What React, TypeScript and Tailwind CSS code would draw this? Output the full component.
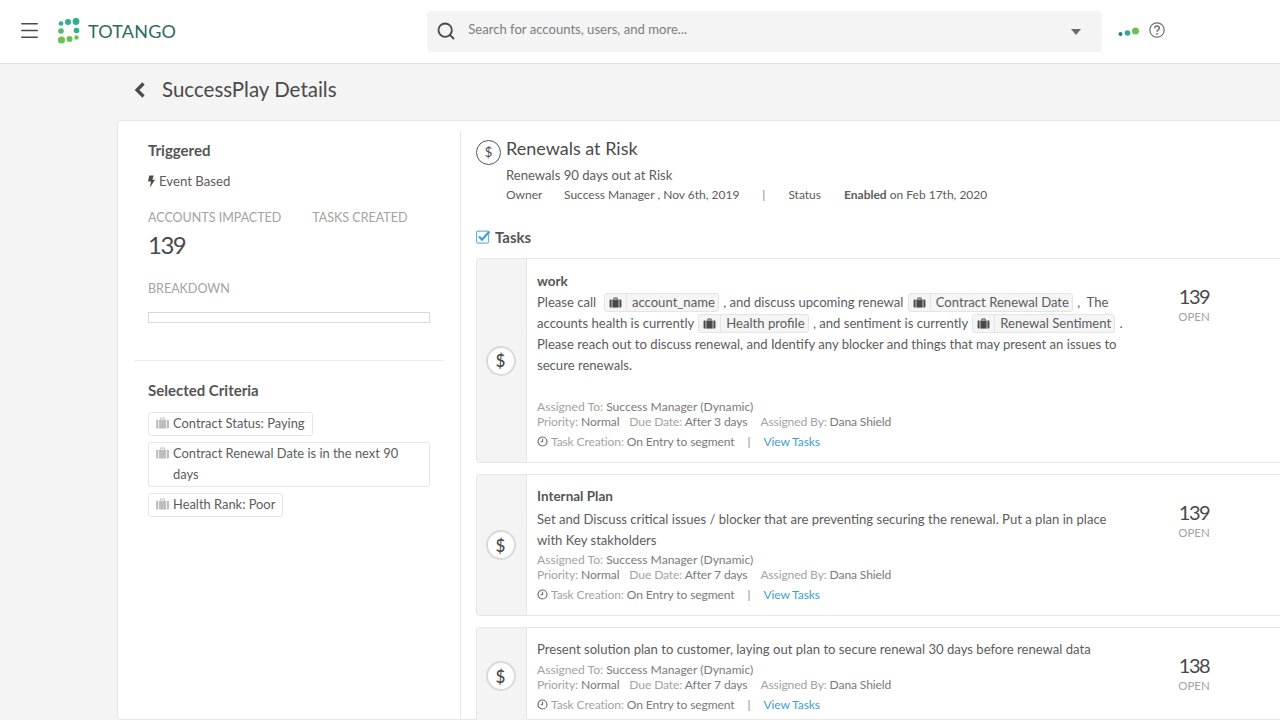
import React from "react";
import { Menu, Search } from "lucide-react";

function Briefcase({ className }: { className?: string }) {
  return (
    <svg viewBox="0 0 14 13" className={className} fill="currentColor">
      <path d="M4.500 3V1.600C4.500 1 5 .5 5.600 .5h2.800c.6 0 1.100 .5 1.100 1.100V3H8.400V1.700H5.600V3z" />
      <rect x="3.300" y="3" width="7.400" height="9.500" />
      <path d="M0 4.200C0 3.500 .5 3 1.200 3h1.200v9.500H1.200C.5 12.500 0 12 0 11.300zM14 4.200C14 3.500 13.500 3 12.800 3h-1.200v9.500h1.200c.7 0 1.200-.5 1.200-1.200z" />
    </svg>
  );
}

function Logo() {
  return (
    <svg viewBox="0 0 26 27" className="h-[27px] w-[26px]">
      <circle cx="4" cy="5.500" r="2.300" fill="#2fae8e" />
      <circle cx="11" cy="4" r="3" fill="#2fae8e" />
      <circle cx="19" cy="3.500" r="3.400" fill="#2fae8e" />
      <circle cx="4" cy="13" r="2.800" fill="#53b96b" />
      <circle cx="19.500" cy="12.500" r="2.800" fill="#2fae8e" />
      <circle cx="4.500" cy="22" r="3.600" fill="#6cc24f" />
      <circle cx="12.500" cy="21" r="3" fill="#6cc24f" />
      <circle cx="19.500" cy="19.500" r="2.200" fill="#6cc24f" />
    </svg>
  );
}

function Dollar({ className }: { className?: string }) {
  return (
    <div className={className}>
      <span className="leading-none">$</span>
    </div>
  );
}

function Token({ label }: { label: string }) {
  return (
    <span className="mx-[1px] mt-[1px] inline-flex h-[19px] items-center rounded-[3px] border border-[#e4e4e4] bg-[#f5f5f5] align-top leading-none">
      <span className="flex h-full w-[22px] items-center justify-center border-r border-[#e4e4e4]">
        <Briefcase className="h-[11px] w-[13px] text-[#4a4a4a]" />
      </span>
      <span className="pl-[5px] pr-[3px]">{label}</span>
    </span>
  );
}

function Clock() {
  return (
    <svg viewBox="0 0 12 12" className="mr-[3px] inline-block h-[11px] w-[11px] align-[-1px]" fill="none" stroke="#6f6f6f" strokeWidth="1.300">
      <circle cx="6" cy="6" r="4.900" />
      <path d="M6 3v3.300H3.800" />
    </svg>
  );
}

function Meta({ due }: { due: string }) {
  return (
    <div className="text-[12.100px] leading-[15px] text-[#a3a3a3]">
      <div>
        Assigned To: <span className="text-[#7a7a7a]">Success Manager (Dynamic)</span>
      </div>
      <div className="flex tracking-[-0.13px]">
        <span>
          Priority: <span className="text-[#7a7a7a]">Normal</span>
        </span>
        <span className="ml-[10px]">
          Due Date: <span className="text-[#7a7a7a]">{due}</span>
        </span>
        <span className="ml-[13px]">
          Assigned By: <span className="text-[#7a7a7a]">Dana Shield</span>
        </span>
      </div>
      <div className="mt-[5px] tracking-[-0.13px]">
        <Clock />
        Task Creation: <span className="text-[#7a7a7a]">On Entry to segment</span>
        <span className="mx-[13px] text-[#8a8a8a]">|</span>
        <span className="text-[#3d9fd3]">View Tasks</span>
      </div>
    </div>
  );
}

function TaskCard({
  height,
  count,
  children,
}: {
  height: string;
  count: string;
  children: React.ReactNode;
}) {
  return (
    <div className={`flex w-[830px] shrink-0 rounded-[3px] border border-[#e6e6e6] ${height}`}>
      <div className="flex w-[50px] shrink-0 items-center justify-center border-r border-[#e6e6e6] bg-[#f4f4f4] pr-[2px]">
        <Dollar className="flex h-[30px] w-[30px] items-center justify-center rounded-full border-2 border-[#d9d9d9] bg-white text-[17px] font-medium text-[#4a4a4a]" />
      </div>
      <div className="w-[642px] shrink-0 pl-[10px]">{children}</div>
      <div className="w-[50px] pt-[25px] text-center">
        <div className="text-[20px] leading-[24px] tracking-[-1.500px] text-[#4a4a4a]">{count}</div>
        <div className="mt-[1px] text-[11.500px] leading-[16px] text-[#a3a3a3]">OPEN</div>
      </div>
    </div>
  );
}

function Criterion({ children, full }: { children: React.ReactNode; full?: boolean }) {
  return (
    <div className={`flex rounded-[3px] border border-[#e6e6e6] pb-[1px] pl-[7px] pr-[7px] text-[12.900px] leading-[21px] text-[#5c5c5c] ${full ? "w-[282px]" : "w-fit"}`}>
      <Briefcase className="mr-[4px] mt-[4px] h-[12px] w-[13px] shrink-0 text-[#bdbdbd]" />
      <div>{children}</div>
    </div>
  );
}

export default function App() {
  return (
    <div className="h-[720px] w-[1280px] overflow-hidden bg-[#f4f4f4] font-['Lato',sans-serif] text-[#4a4a4a]">
      <header className="flex h-[64px] items-center border-b border-[#e2e2e2] bg-white">
        <Menu className="mb-[3px] ml-[18px] h-[23px] w-[23px] text-[#4a4a4a]" strokeWidth={1.700} />
        <div className="ml-[16px] flex items-center gap-[5px]">
          <Logo />
          <span className="text-[18px] tracking-[0.2px] text-[#2e6b5e]">TOTANGO</span>
        </div>
        <div className="ml-[251px] flex h-[41px] w-[675px] items-center rounded-[4px] bg-[#f4f4f4] px-[9px]">
          <Search className="mb-[2px] h-[20px] w-[20px] text-[#4a4a4a]" strokeWidth={2.200} />
          <span className="mb-[3px] ml-[12px] flex-1 text-[13.100px] text-[#7d7d7d]">Search for accounts, users, and more...</span>
          <span className="mr-[12px] h-0 w-0 border-x-[5px] border-t-[6px] border-x-transparent border-t-[#6b6b6b]" />
        </div>
        <svg viewBox="0 0 22 10" className="ml-[16px] h-[10px] w-[22px]">
          <circle cx="2.500" cy="7" r="2" fill="#1d7f8c" />
          <circle cx="9.500" cy="6" r="2.800" fill="#2fae8e" />
          <circle cx="17.500" cy="4" r="3.500" fill="#6cc24f" />
        </svg>
        <svg viewBox="0 0 16 16" className="mb-[4px] ml-[9px] h-[16px] w-[16px]" fill="none" stroke="#6f6f6f" strokeWidth="1.200">
          <circle cx="8" cy="8" r="7.200" />
          <path d="M5.700 6.200C5.700 4.900 6.700 4 8 4s2.300.9 2.300 2.100c0 1.800-2.300 1.800-2.300 3.700" strokeWidth="1.500" />
          <circle cx="8" cy="11.900" r=".9" fill="#6f6f6f" stroke="none" />
        </svg>
      </header>

      <div className="flex h-[56px] items-center pb-[6px] pl-[134px]">
        <svg viewBox="0 0 11 16" className="mt-[2px] h-[16px] w-[11px]" fill="none" stroke="#4a4a4a" strokeWidth="3.200">
          <path d="M9.500 1.500 3 8l6.500 6.500" />
        </svg>
        <h1 className="ml-[17px] text-[20.500px] text-[#4a4a4a]">SuccessPlay Details</h1>
      </div>

      <main className="ml-[117px] flex h-[600px] w-[1200px] rounded-[3px] border border-[#e8e8e8] bg-white pt-[9px]">
        <aside className="w-[343px] shrink-0 border-r border-[#e8e8e8]">
          <div className="px-[30px] pt-[10px]">
            <h2 className="text-[15px] font-bold leading-[20px] text-[#555]">Triggered</h2>
            <div className="mt-[11px] flex items-center text-[13.200px] leading-[20px] text-[#5c5c5c]">
              <svg viewBox="0 0 8 14" className="mr-[4px] h-[13px] w-[7px]" fill="#4a4a4a">
                <path d="M1.500 0H6.500L5 5H8L2 14 3.500 7H0z" />
              </svg>
              Event Based
            </div>
            <div className="mt-[17px] flex text-[12.500px] leading-[20px] text-[#a3a3a3]">
              <span>ACCOUNTS IMPACTED</span>
              <span className="ml-[31px]">TASKS CREATED</span>
            </div>
            <div className="mt-[1px] text-[24px] leading-[32px] tracking-[-1.500px] text-[#4a4a4a]">139</div>
            <div className="mt-[18px] text-[12.500px] leading-[20px] text-[#a3a3a3]">BREAKDOWN</div>
            <div className="mt-[13px] h-[11px] w-[282px] border border-[#d9d9d9]" />
          </div>
          <div className="mx-[16px] mt-[37px] border-t border-[#ececec]" />
          <div className="px-[30px] pt-[19px]">
            <h2 className="text-[15px] font-bold leading-[20px] text-[#555]">Selected Criteria</h2>
            <div className="mt-[12px] flex flex-col gap-[6px]">
              <Criterion>Contract Status: Paying</Criterion>
              <Criterion full>Contract Renewal Date is in the next 90 days</Criterion>
              <Criterion>Health Rank: Poor</Criterion>
            </div>
          </div>
        </aside>

        <section className="min-w-0 flex-1 pl-[15px]">
          <div className="flex">
            <Dollar className="mt-[10px] flex h-[25px] w-[25px] items-center justify-center rounded-full border border-[#555] text-[13px]" />
            <div className="ml-[5px]">
              <div className="mt-[6px] text-[18px] leading-[24px] text-[#4a4a4a]">Renewals at Risk</div>
              <div className="mt-[5px] text-[13.100px] leading-[20px] text-[#5c5c5c]">Renewals 90 days out at Risk</div>
              <div className="flex text-[12px] leading-[20px] text-[#5c5c5c]">
                <span className="w-[58px]">Owner</span>
                <span>Success Manager , Nov 6th, 2019</span>
                <span className="mx-[23px] text-[#8a8a8a]">|</span>
                <span>Status</span>
                <span className="ml-[23px]">
                  <b className="font-bold">Enabled</b> on Feb 17th, 2020
                </span>
              </div>
            </div>
          </div>
          <div className="mt-[22px] flex items-center">
            <svg viewBox="0 0 14 14" className="h-[14px] w-[14px]" fill="none">
              <rect x=".6" y="1.100" width="12" height="12" rx="1.500" stroke="#6cb6e0" strokeWidth="1.200" />
              <path d="M3 6.500 6 9.700 13.500 1.500" stroke="#3d9fd3" strokeWidth="2.200" />
            </svg>
            <span className="ml-[5px] text-[15px] font-bold leading-[20px] text-[#555]">Tasks</span>
          </div>

          <div className="mt-[11px] flex flex-col gap-[11px]">
            <TaskCard height="h-[205px]" count="139">
              <div className="pt-[12px] text-[13.100px] leading-[21px] text-[#5c5c5c]">
                <div className="text-[13.500px] font-bold text-[#555]">work</div>
                Please call&nbsp; <Token label="account_name" /> , and discuss upcoming renewal <Token label="Contract Renewal Date" /> ,&nbsp; The
                <br />
                accounts health is currently <Token label="Health profile" /> , and sentiment is currently <Token label="Renewal Sentiment" /> .
                <br />
                Please reach out to discuss renewal, and Identify any blocker and things that may present an issues to
                <br />
                secure renewals.
              </div>
              <div className="mt-[23px]">
                <Meta due="After 3 days" />
              </div>
            </TaskCard>

            <TaskCard height="h-[142px]" count="139">
              <div className="pt-[11px] text-[13.100px] leading-[21px] text-[#5c5c5c]">
                <div className="mb-[2px] text-[13.500px] font-bold text-[#555]">Internal Plan</div>
                Set and Discuss critical issues / blocker that are preventing securing the renewal. Put a plan in place
                <br />
                with Key stakholders
              </div>
              <div className="mt-[1px]">
                <Meta due="After 7 days" />
              </div>
            </TaskCard>

            <TaskCard height="h-[98px]" count="138">
              <div className="pt-[11px] text-[13.100px] leading-[21px] text-[#5c5c5c]">
                Present solution plan to customer, laying out plan to secure renewal 30 days before renewal data
              </div>
              <div className="mt-[2px]">
                <Meta due="After 7 days" />
              </div>
            </TaskCard>
          </div>
        </section>
      </main>
    </div>
  );
}
